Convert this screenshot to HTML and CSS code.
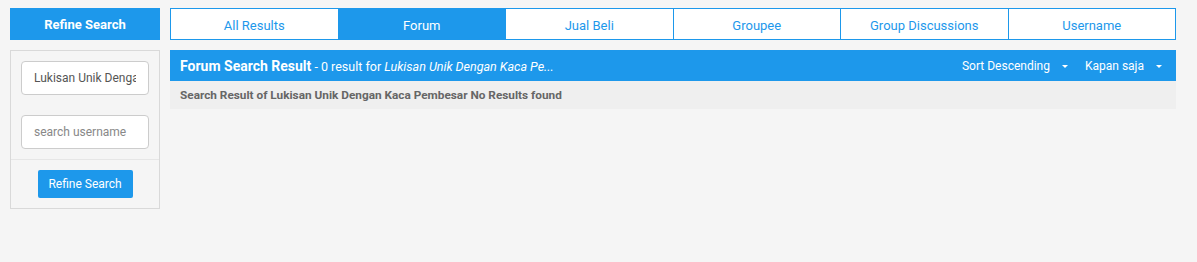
FILE: index.html
```html
<!doctype html>
<html>
<head>
  <link rel="stylesheet" href="styles.css">
</head>
<body>
  <div class="page">
    <div class="sidebar">
      <div class="side-title">Refine Search</div>
      <div class="side-box">
        <div class="side-fields">
          <input class="field" type="text" value="Lukisan Unik Dengan Kaca Pembesar">
          <input class="field" type="text" placeholder="search username">
        </div>
        <div class="side-actions">
          <button class="refine-btn">Refine Search</button>
        </div>
      </div>
    </div>

    <div class="main">
      <div class="tabs">
        <a class="tab">All Results</a>
        <a class="tab active">Forum</a>
        <a class="tab">Jual Beli</a>
        <a class="tab">Groupee</a>
        <a class="tab">Group Discussions</a>
        <a class="tab">Username</a>
      </div>

      <div class="result-head">
        <div class="result-title">
          <strong>Forum Search Result</strong> - 0 result for <em>Lukisan Unik Dengan Kaca Pe...</em>
        </div>
        <div class="result-tools">
          <span class="drop">Sort Descending <i class="caret"></i></span>
          <span class="drop">Kapan saja <i class="caret"></i></span>
        </div>
      </div>
      <div class="result-info">Search Result of Lukisan Unik Dengan Kaca Pembesar No Results found</div>
    </div>
  </div>
</body>
</html>
```

FILE: styles.css
```css
body{
  margin:0;
  background:#f5f5f5;
  font-family: Roboto, "Liberation Sans", sans-serif;
}
.page{
  display:flex;
  gap:10px;
  width:1166px;
  padding:8px 10px;
}
.sidebar{
  width:150px;
  flex-shrink:0;
}
.side-title{
  background:#1d98eb;
  color:#fff;
  font-weight:bold;
  font-size:13px;
  height:32px;
  line-height:34px;
  text-align:center;
}
.side-box{
  margin-top:10px;
  border:1px solid #d9d9d9;
}
.side-fields{
  display:flex;
  flex-direction:column;
  gap:20px;
  padding:10px 10px 10px;
  border-bottom:1px solid #e6e6e6;
}
.field{
  width:128px;
  height:34px;
  box-sizing:border-box;
  border:1px solid #cccccc;
  border-radius:4px;
  background:#fff;
  padding:0 12px;
  font-family: Roboto, "Liberation Sans", sans-serif;
  font-size:12px;
  color:#555;
  outline:none;
}
.field::placeholder{
  color:#888;
}
.side-actions{
  text-align:center;
  padding:10px 0 10px;
}
.refine-btn{
  background:#1d98eb;
  color:#fff;
  border:none;
  border-radius:2px;
  height:28px;
  width:95px;
  font-family: Roboto, "Liberation Sans", sans-serif;
  font-size:12px;
  padding:0;
}
.main{
  flex:1;
}
.tabs{
  display:flex;
  border:1px solid #1d98eb;
  background:#fff;
  height:32px;
  box-sizing:border-box;
}
.tab{
  flex:1;
  text-align:center;
  line-height:33px;
  font-size:13px;
  color:#1d98eb;
  border-left:1px solid #1d98eb;
}
.tab:first-child{
  border-left:none;
}
.tab.active{
  background:#1d98eb;
  color:#fff;
}
.result-head{
  margin-top:10px;
  background:#1d98eb;
  color:#fff;
  height:31px;
  display:flex;
  align-items:center;
  justify-content:space-between;
  padding:0 14px 0 10px;
  font-size:12.5px;
}
.result-title strong{
  font-size:14px;
}
.result-tools{
  display:flex;
  gap:17px;
  font-size:12px;
}
.drop{
  display:flex;
  align-items:center;
  gap:12px;
}
.caret{
  display:inline-block;
  width:0;
  height:0;
  border-left:3px solid transparent;
  border-right:3px solid transparent;
  border-top:3px solid #fff;
  margin-top:2px;
}
.result-info{
  background:#efefef;
  height:28px;
  line-height:29px;
  padding:0 10px;
  font-size:11.8px;
  font-weight:bold;
  color:#666;
}
```
